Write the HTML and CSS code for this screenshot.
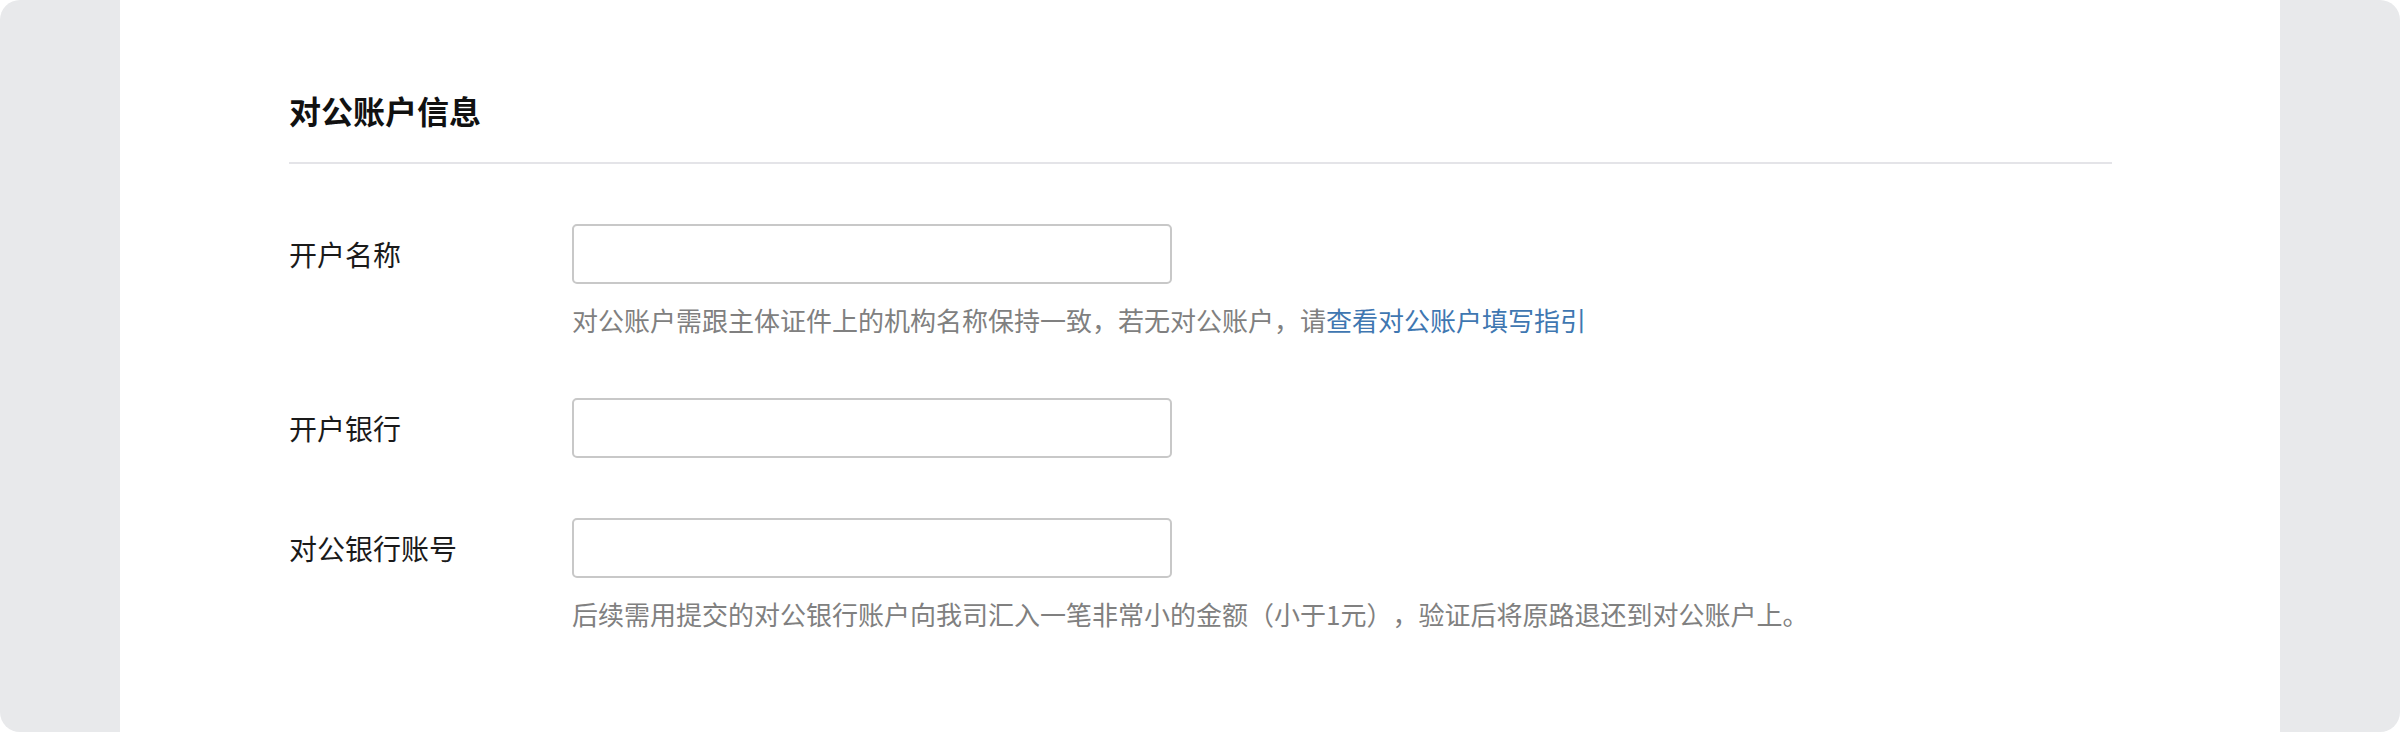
FILE: index.html
```html
<!DOCTYPE html>
<html lang="zh-CN">
<head>
<meta charset="utf-8">
<title>对公账户信息</title>
<link rel="stylesheet" href="styles.css">
</head>
<body>
<div class="frame">
  <main class="panel">
    <header class="section-head">
      <h2 class="section-title">对公账户信息</h2>
    </header>
    <form class="form">
      <div class="field">
        <div class="field-row">
          <label class="field-label" for="acc-name">开户名称</label>
          <input class="field-input" id="acc-name" type="text">
        </div>
        <p class="field-help">对公账户需跟主体证件上的机构名称保持一致，若无对公账户，请<a class="help-link" href="#">查看对公账户填写指引</a></p>
      </div>
      <div class="field">
        <div class="field-row">
          <label class="field-label" for="acc-bank">开户银行</label>
          <input class="field-input" id="acc-bank" type="text">
        </div>
      </div>
      <div class="field">
        <div class="field-row">
          <label class="field-label" for="acc-no">对公银行账号</label>
          <input class="field-input" id="acc-no" type="text">
        </div>
        <p class="field-help">后续需用提交的对公银行账户向我司汇入一笔非常小的金额（小于1元），验证后将原路退还到对公账户上。</p>
      </div>
    </form>
  </main>
</div>
</body>
</html>
```

FILE: styles.css
```css
* {
  box-sizing: border-box;
}

html, body {
  margin: 0;
  padding: 0;
  background: #ffffff;
}

body {
  font-family: "Noto Sans CJK SC", "Noto Sans", "Liberation Sans", sans-serif;
  text-spacing-trim: space-all;
}

.frame {
  width: 2400px;
  height: 732px;
  background: #e8e9eb;
  border-radius: 20px;
  overflow: hidden;
  padding: 0 120px;
}

.panel {
  height: 100%;
  background: #ffffff;
  padding: 0 168px 0 169px;
}

.section-head {
  padding-top: 88px;
  padding-bottom: 30px;
  border-bottom: 2px solid #e4e4e8;
}

.section-title {
  margin: 0;
  font-size: 32px;
  line-height: 44px;
  font-weight: 700;
  color: #111111;
}

.form {
  display: flex;
  flex-direction: column;
  gap: 60px;
  padding-top: 60px;
}

.field-row {
  display: flex;
  align-items: center;
}

.field-label {
  width: 283px;
  flex: none;
  font-size: 28px;
  line-height: 60px;
  color: #1a1a1a;
}

.field-input {
  width: 600px;
  height: 60px;
  border: 2px solid #c8c8c8;
  border-radius: 5px;
  background: #ffffff;
  font: inherit;
  font-size: 26px;
  padding: 0 16px;
  margin: 0;
  outline: none;
}

.field-help {
  margin: 18px 0 0 283px;
  font-size: 26px;
  line-height: 36px;
  color: #808080;
  text-spacing-trim: space-all;
}

.help-link {
  color: #3f77b1;
  text-decoration: none;
}
```
